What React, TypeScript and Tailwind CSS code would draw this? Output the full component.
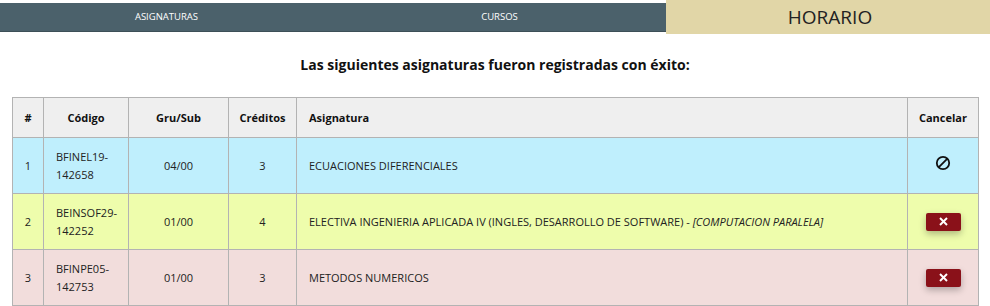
import React from "react";

const rows = [
  { n: "1", code: ["BFINEL19-", "142658"], gru: "04/00", cred: "3", name: "ECUACIONES DIFERENCIALES", extra: "", bg: "bg-[#bfeffd]", ban: true },
  { n: "2", code: ["BEINSOF29-", "142252"], gru: "01/00", cred: "4", name: "ELECTIVA INGENIERIA APLICADA IV (INGLES, DESARROLLO DE SOFTWARE) - ", extra: "[COMPUTACION PARALELA]", bg: "bg-[#eefdac]", ban: false },
  { n: "3", code: ["BFINPE05-", "142753"], gru: "01/00", cred: "3", name: "METODOS NUMERICOS", extra: "", bg: "bg-[#f2dddc]", ban: false },
];

function BanIcon() {
  return (
    <svg width="16" height="16" viewBox="0 0 16 16" className="inline-block">
      <circle cx="8" cy="8" r="6.2" fill="none" stroke="#111" strokeWidth="1.8" />
      <line x1="12.4" y1="3.6" x2="3.6" y2="12.4" stroke="#111" strokeWidth="1.8" />
    </svg>
  );
}

function XIcon() {
  return (
    <svg width="9" height="9" viewBox="0 0 9 9">
      <line x1="1" y1="1" x2="8" y2="8" stroke="#fff" strokeWidth="2" />
      <line x1="8" y1="1" x2="1" y2="8" stroke="#fff" strokeWidth="2" />
    </svg>
  );
}

export default function App() {
  const cell = "border border-[#b3b3b3] align-middle";
  return (
    <div className="w-[990px] h-[306px] bg-white overflow-hidden text-[#222]" style={{ fontFamily: '"Open Sans", "Liberation Sans", sans-serif' }}>
      <div className="flex h-[34px]">
        <div className="flex flex-1 mt-[3px] h-[29px] bg-[#4b616b] border-b border-[#3d4f57]">
          <div className="w-[333px] flex items-center justify-center text-white text-[9.5px]">ASIGNATURAS</div>
          <div className="w-[333px] flex items-center justify-center text-white text-[9.5px]">CURSOS</div>
        </div>
        <div className="w-[324px] bg-[#e1d6a7] flex items-center justify-center text-[19px] text-[#222] pt-[1px] pl-[4px]">HORARIO</div>
      </div>
      <div className="h-[22px] mt-[20px] text-center font-bold text-[14px] text-[#111] leading-[22px]">
        Las siguientes asignaturas fueron registradas con éxito:
      </div>
      <div className="pl-[12px] mt-[21px]">
        <table className="table-fixed border-collapse w-[966px] text-[11px] leading-[17px]">
          <colgroup>
            <col className="w-[31px]" />
            <col className="w-[85px]" />
            <col className="w-[100px]" />
            <col className="w-[68px]" />
            <col className="w-[611px]" />
            <col className="w-[71px]" />
          </colgroup>
          <thead>
            <tr className="h-[40px] bg-[#efefef] font-bold text-[#111]">
              <th className={`${cell} text-center`}>#</th>
              <th className={`${cell} text-center`}>Código</th>
              <th className={`${cell} text-center`}>Gru/Sub</th>
              <th className={`${cell} text-center`}>Créditos</th>
              <th className={`${cell} text-left pl-[12px]`}>Asignatura</th>
              <th className={`${cell} text-center`}>Cancelar</th>
            </tr>
          </thead>
          <tbody>
            {rows.map((r) => (
              <tr key={r.n} className={`h-[56px] ${r.bg}`}>
                <td className={`${cell} text-center`}>{r.n}</td>
                <td className={`${cell} text-left pl-[12px] leading-[18px]`}>
                  {r.code[0]}
                  <br />
                  {r.code[1]}
                </td>
                <td className={`${cell} text-center`}>{r.gru}</td>
                <td className={`${cell} text-center`}>{r.cred}</td>
                <td className={`${cell} text-left pl-[12px]`}>
                  {r.name}
                  {r.extra && <i>{r.extra}</i>}
                </td>
                <td className={`${cell} text-center`}>
                  {r.ban ? (
                    <span className="inline-flex mt-[-2px]"><BanIcon /></span>
                  ) : (
                    <span className="inline-flex items-center justify-center w-[35px] h-[18px] rounded-[2px] bg-[#8a1119] shadow-[0_3px_7px_rgba(0,0,0,0.28)]">
                      <XIcon />
                    </span>
                  )}
                </td>
              </tr>
            ))}
          </tbody>
        </table>
      </div>
    </div>
  );
}
